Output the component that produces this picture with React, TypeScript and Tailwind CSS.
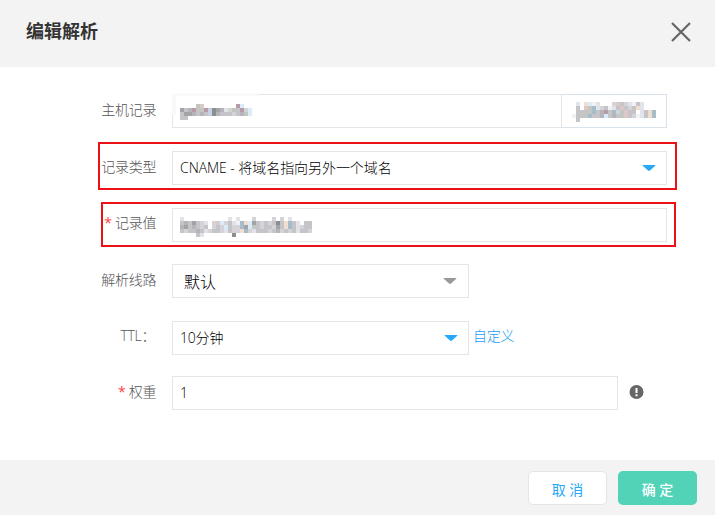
import React from "react";

// Obscured values: each row is a string of tints, one per 4px cell ("." is empty).
const TINTS: Record<string, string> = {
  a: "#f0f1f4", b: "#e2e3e8", c: "#d3d3d8", d: "#c4c4c9", e: "#b5b4ba", f: "#a3a3a6",
  g: "#8c8d90", p: "#dcc8c6", r: "#b69aa6", u: "#c9cfe2", v: "#c2c8bd", w: "#d9ecfa", o: "#f0dfcf", t: "#a7bcc9",
};

function Mosaic({ rows, className = "" }: { rows: string[]; className?: string }) {
  return (
    <svg className={className} width={rows[0].length * 4} height={rows.length * 4} shapeRendering="crispEdges" aria-hidden="true">
      {rows.map((row, y) =>
        row.split("").map((k, x) =>
          k === "." ? null : <rect key={`${x}-${y}`} x={x * 4} y={y * 4} width={4} height={4} fill={TINTS[k]} />
        )
      )}
    </svg>
  );
}

function Arrow({ className }: { className: string }) {
  return (
    <svg className={className} width="14" height="7" viewBox="0 0 14 7" fill="currentColor">
      <path d="M1 0h12q.8 0 .2.7L8 5.6q-1 .8-2 0L.8.7Q.2 0 1 0Z" />
    </svg>
  );
}

function Label({ children, required, className = "pr-4 leading-8" }: { children: React.ReactNode; required?: boolean; className?: string }) {
  return (
    <div className={`h-8 w-[172px] shrink-0 text-right whitespace-nowrap text-[#555] ${className}`}>
      {required && <span className="mr-[3px] font-normal text-[#ff4444]">*</span>}
      <span className="-mr-[0.25px] tracking-[-0.25px]">{children}</span>
    </div>
  );
}

const box = "flex h-[34px] items-center border border-[#e5e5e5] bg-white text-black";

export default function App() {
  return (
    <div className="flex h-[515px] w-[715px] flex-col overflow-hidden bg-white font-['Open_Sans','Noto_Sans_CJK_SC',sans-serif] text-sm font-light">
      <header className="flex h-[67px] shrink-0 items-start justify-between bg-[#f3f3f3] pt-[18px] pr-6 pl-[26px]">
        <h1 className="text-lg leading-[26px] font-bold text-[#333]">编辑解析</h1>
        <svg className="mt-1" width="20" height="20" viewBox="0 0 20 20" stroke="#666" strokeWidth="2.2">
          <path d="M1 1l18 18M19 1L1 19" />
        </svg>
      </header>

      <main className="flex grow flex-col pt-[27px]">
        <div className="relative flex h-[34px]">
          <Label>主机记录</Label>
          <div className={`${box} w-[390px] pl-[7px]`}>
            <Mosaic className="mt-0.5" rows={["....vp........rw..", "fderdvrugfebcvdrcw", "dffededugedddcdevw", "dd................"]} />
          </div>
          <div className="flex h-[34px] w-[105px] items-center border border-l-0 border-[#d9e1e9] pl-[10px]">
            <Mosaic className="mt-0.5" rows={[".b.owab...cpdcbadb...", ".d.pvtbcdabdpdcdob...", ".ddvdtderdtcdpdd.bdot", "advdtddewdedvpdcabdot", ".d..................."]} />
          </div>
          <div className="absolute -top-[1px] left-[174px] h-[3px] w-[84px] rounded-t-sm bg-[#f9f9f9]" />
          <div className="absolute top-0 left-[172px] h-[21px] w-1 bg-[#f9f9f9]" />
        </div>

        <div className="relative mt-[23px] flex h-[34px]">
          <Label>记录类型</Label>
          <div className={`${box} w-[495px] justify-between pr-[10px] pl-[7px]`}>
            <span className="tracking-[-0.06px]">CNAME - 将域名指向另外一个域名</span>
            <Arrow className="text-[#28a9f7]" />
          </div>
          <div className="pointer-events-none absolute -top-[9px] left-[98px] h-12 w-[579px] border-2 border-[#ed1117]" />
        </div>

        <div className="relative mt-[23px] flex h-[33px]">
          <Label required className="pr-4 leading-[30px]">记录值</Label>
          <div className={`${box} h-[33px] w-[495px] pl-[7px]`}>
            <Mosaic className="mt-[3px]" rows={["b...........b.b...c....c.c.b.....", "dedfdcb.cpwcdbatowfdcdcdgdotdb.dd", "efdedcd.cdcwdcctfwvdcddcfdotdbcdd", "dcddedbcddcbdccotcbdddcdecdcdbddc", "....db.......g..................."]} />
          </div>
          <div className="pointer-events-none absolute -top-[6px] left-[101px] h-[45px] w-[575px] border-2 border-[#ed1117]" />
        </div>

        <div className="mt-[23px] flex h-[34px]">
          <Label>解析线路</Label>
          <div className={`${box} w-[297px] justify-between pr-[11px] pl-[11px] text-base`}>
            <span className="pt-0.5">默认</span>
            <Arrow className="text-[#999]" />
          </div>
        </div>

        <div className="mt-[23px] flex h-[34px]">
          <Label className="pr-[17px] leading-[30px]">TTL：</Label>
          <div className={`${box} w-[297px] justify-between pr-[10px] pl-[7px]`}>
            <span className="tracking-[-0.2px]">10分钟</span>
            <Arrow className="text-[#28a9f7]" />
          </div>
          <a className="ml-1 leading-[30px] tracking-[-0.2px] text-[#1a9ff5]">自定义</a>
        </div>

        <div className="mt-[21px] flex h-[34px]">
          <Label required>权重</Label>
          <div className={`${box} w-[446px] pl-[7px]`}>1</div>
          <svg className="mt-[9px] ml-[11px]" width="15" height="15" viewBox="0 0 15 15">
            <circle cx="7.5" cy="7" r="7" fill="#666" />
            <path d="M6.5 3h2v5h-2zM6.5 9.2h2v2h-2z" fill="#fff" />
          </svg>
        </div>
      </main>

      <footer className="flex h-[55px] shrink-0 items-start justify-end gap-[11px] bg-[#f3f3f3] pt-[11px] pr-[18px]">
        <button className="h-[34px] w-[79px] rounded-[5px] border border-[#e5e5e5] bg-white pt-[3px] font-normal text-[#28a9f7]">取 消</button>
        <button className="h-[34px] w-[79px] rounded-[5px] bg-[#52d3b8] pt-[3px] font-medium text-white">确 定</button>
      </footer>
    </div>
  );
}
